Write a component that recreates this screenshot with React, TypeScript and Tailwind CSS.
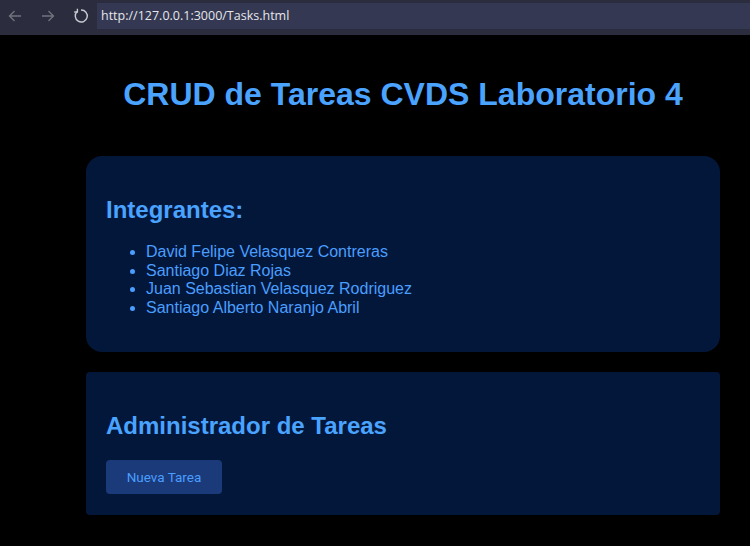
import React from "react";

const members = [
  "David Felipe Velasquez Contreras",
  "Santiago Diaz Rojas",
  "Juan Sebastian Velasquez Rodriguez",
  "Santiago Alberto Naranjo Abril",
];

const BrowserBar: React.FC = () => (
  <div className="flex h-[35px] items-start bg-[#2b2c3d] pt-[3px]">
    <div className="flex h-[26px] w-[97px] items-center">
      <svg className="ml-[8px] h-[14px] w-[14px]" viewBox="0 0 14 14" fill="none" stroke="#70737f" strokeWidth="1.3">
        <path d="M13 7H1.5M6.5 2L1.5 7l5 5" />
      </svg>
      <svg className="ml-[19px] h-[14px] w-[14px]" viewBox="0 0 14 14" fill="none" stroke="#70737f" strokeWidth="1.3">
        <path d="M1 7h11.5M7.5 2l5 5-5 5" />
      </svg>
      <svg className="ml-[18px] h-[16px] w-[16px]" viewBox="0 0 16 16" fill="none" stroke="#c9cad2" strokeWidth="1.4">
        <path d="M4.2 3.6A6 6 0 1 0 8 2" />
        <path d="M4.4 0.8v3.2H1.2" />
      </svg>
    </div>
    <div className="flex h-[26px] flex-1 items-center bg-[#343852] pl-[4px]">
      <span className="font-['Open_Sans',sans-serif] text-[12.5px] text-[#e6e6ea]">
        http://127.0.0.1:3000/Tasks.html
      </span>
    </div>
  </div>
);

export default function App() {
  return (
    <div className="min-h-[546px] bg-black font-['Liberation_Sans',Arial,sans-serif] text-[#4a9eff]">
      <BrowserBar />
      <div className="ml-[86px] w-[634px] pb-8 pt-[41px]">
        <h1 className="text-center text-[32px] font-bold leading-[37px] text-[#4aa3ff]">
          CRUD de Tareas CVDS Laboratorio 4
        </h1>
        <section className="mt-[43px] rounded-2xl bg-[#03173a] px-5 pb-[19px] pt-5">
          <h2 className="my-[19.9px] text-[24px] font-bold leading-[27.6px] text-[#4aa3ff]">
            Integrantes:
          </h2>
          <ul className="my-4 list-disc pl-10 text-[16px] leading-[18.4px]">
            {members.map((m) => (
              <li key={m}>{m}</li>
            ))}
          </ul>
        </section>
        <section className="mt-5 rounded bg-[#03173a] px-5 pb-[21px] pt-5">
          <h2 className="mb-[20.5px] mt-[19.9px] text-[24px] font-bold leading-[27.6px] text-[#4aa3ff]">
            Administrador de Tareas
          </h2>
          <button className="h-[34px] w-[116px] rounded bg-[#1b3a7a] font-['Roboto',sans-serif] text-[13.5px] text-[#4a9eff]">
            Nueva Tarea
          </button>
        </section>
      </div>
    </div>
  );
}
